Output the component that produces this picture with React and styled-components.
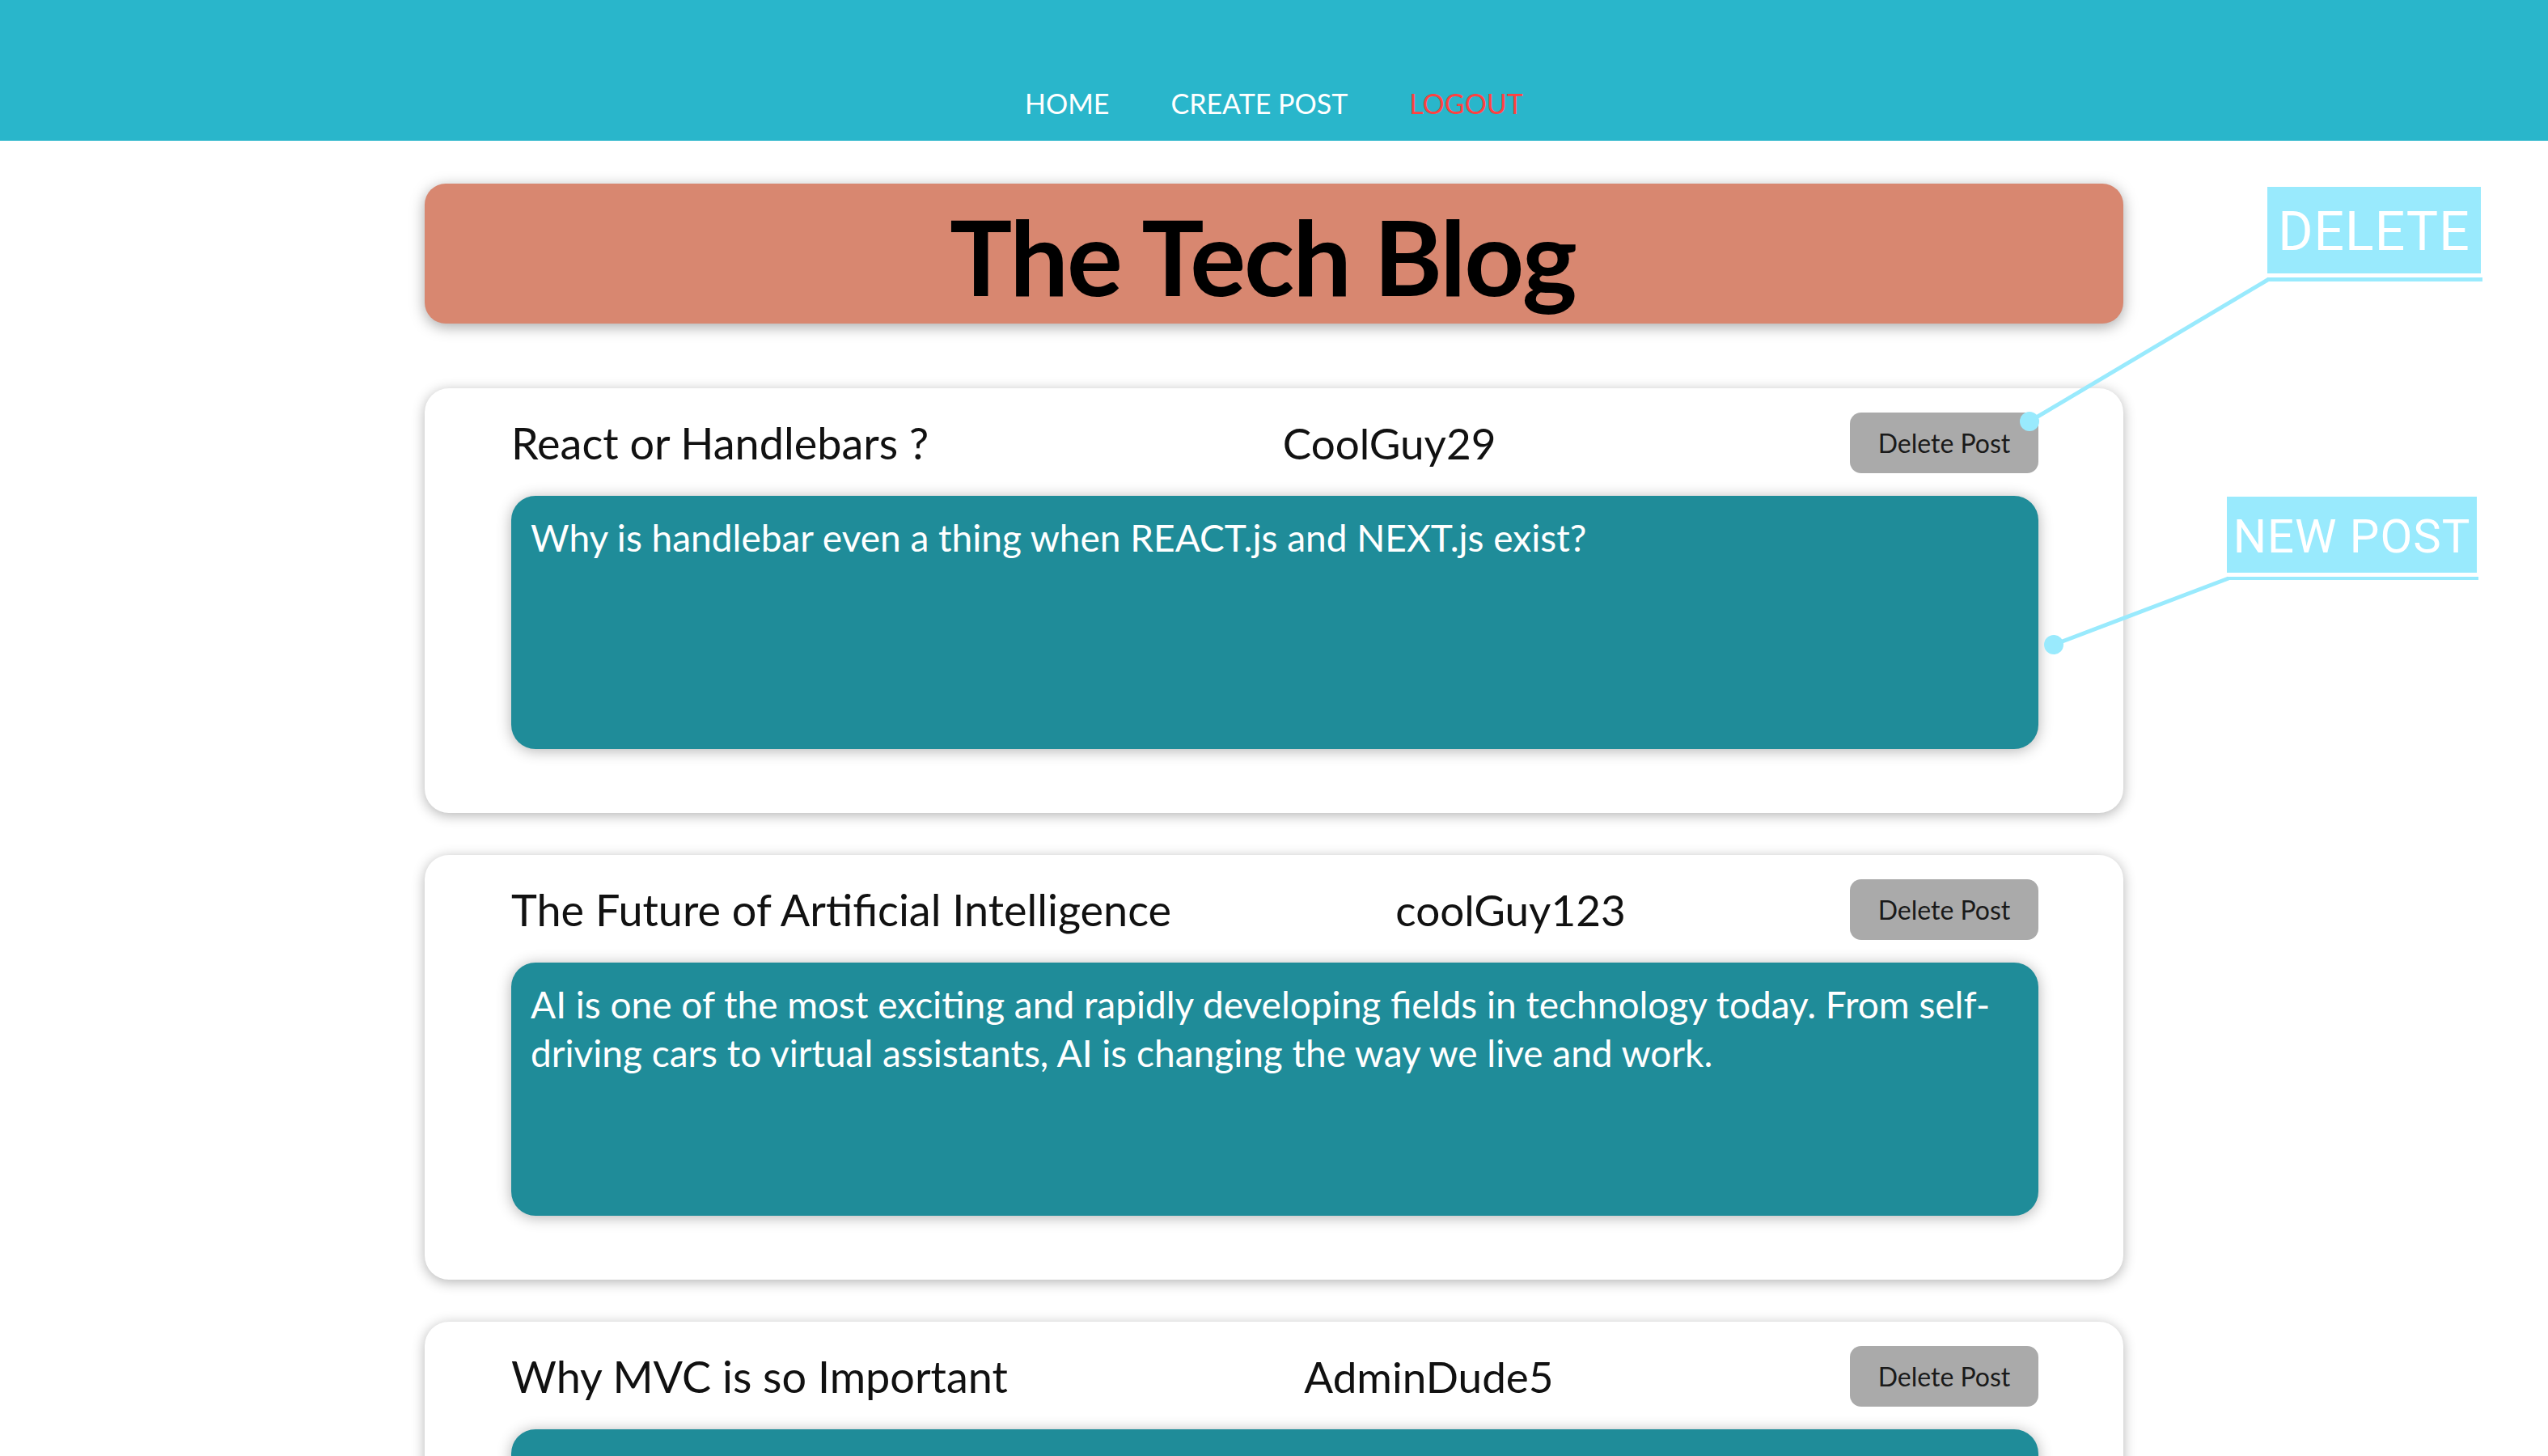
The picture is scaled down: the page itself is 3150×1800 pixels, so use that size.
import React from "react";
import styled, { createGlobalStyle } from "styled-components";

const GlobalStyle = createGlobalStyle`
  html, body {
    margin: 0;
    padding: 0;
    background: #ffffff;
  }
  body {
    font-family: Lato, "Open Sans", sans-serif;
    color: #111;
  }
  * {
    box-sizing: border-box;
  }
`;

const Page = styled.div`
  position: relative;
  min-height: 100vh;
  overflow: hidden;
`;

/* Nav */

const NavBar = styled.nav`
  height: 174px;
  padding-top: 80px;
  background: #29b6cb;
  display: flex;
  justify-content: center;
  align-items: center;
  gap: 76px;
`;

const NavLink = styled.a`
  font-family: Lato, sans-serif;
  font-size: 34px;
  color: ${(p) => (p.$danger ? "#ff4141" : "#ffffff")};
  text-decoration: none;
  cursor: pointer;
`;

/* Main column */

const Main = styled.main`
  width: 2100px;
  margin: 53px auto 0;
`;

const Banner = styled.header`
  height: 173px;
  padding-right: 28px;
  background: #d88770;
  border-radius: 26px;
  box-shadow: 0 4px 18px rgba(0, 0, 0, 0.35);
  display: flex;
  justify-content: center;
  align-items: center;
`;

const BannerTitle = styled.h1`
  margin: 0;
  padding-top: 6px;
  font-family: Lato, sans-serif;
  font-weight: 700;
  font-size: 129px;
  letter-spacing: -2px;
  color: #000;
  line-height: 1;
`;

const PostList = styled.section`
  margin-top: 80px;
  display: flex;
  flex-direction: column;
  gap: 52px;
`;

const PostCard = styled.article`
  height: 525px;
  background: #fff;
  border-radius: 30px;
  box-shadow: 0 3px 16px rgba(0, 0, 0, 0.3);
  padding: 30px 105px 79px 107px;
  display: flex;
  flex-direction: column;
  gap: 28px;
`;

const PostHead = styled.div`
  height: 75px;
  display: flex;
  justify-content: space-between;
  align-items: center;
`;

const PostTitle = styled.h2`
  margin: 0;
  font-family: Lato, sans-serif;
  font-weight: 400;
  font-size: 54px;
  color: #111;
`;

const Author = styled.span`
  font-family: Lato, sans-serif;
  font-size: 53px;
  color: #111;
`;

const DeleteButton = styled.button`
  width: 233px;
  height: 75px;
  border: none;
  border-radius: 14px;
  background: #aaaaaa;
  font-family: Lato, sans-serif;
  font-size: 32px;
  color: #1a1a1a;
  cursor: pointer;
`;

const PostBody = styled.div`
  height: 313px;
  background: #1f8c99;
  border-radius: 30px;
  box-shadow: 0 2px 18px rgba(0, 0, 0, 0.3);
  padding: 22px 24px;
  font-family: Lato, sans-serif;
  font-size: 46px;
  line-height: 60px;
  color: #ffffff;
`;

/* Callouts drawn over the page */

const CalloutLines = styled.svg`
  position: absolute;
  top: 0;
  left: 0;
  pointer-events: none;
`;

const CalloutLabel = styled.div`
  position: absolute;
  top: ${(p) => p.$top}px;
  left: ${(p) => p.$left}px;
  width: ${(p) => p.$width}px;
  height: ${(p) => p.$height}px;
  background: #99eafd;
  color: #ffffff;
  font-family: Roboto, "DejaVu Sans", sans-serif;
  font-size: ${(p) => p.$size}px;
  letter-spacing: 1px;
  display: flex;
  justify-content: center;
  align-items: center;
  padding-top: 4px;
`;

const posts = [
  {
    id: 1,
    title: "React or Handlebars ?",
    author: "CoolGuy29",
    body: "Why is handlebar even a thing when REACT.js and NEXT.js exist?",
  },
  {
    id: 2,
    title: "The Future of Artificial Intelligence",
    author: "coolGuy123",
    body:
      "AI is one of the most exciting and rapidly developing fields in technology today. From self-driving cars to virtual assistants, AI is changing the way we live and work.",
  },
  {
    id: 3,
    title: "Why MVC is so Important",
    author: "AdminDude5",
    body: "",
  },
];

function Callouts() {
  const cyan = "#99eafd";
  return (
    <>
      <CalloutLines width="3150" height="1800" viewBox="0 0 3150 1800">
        {/* DELETE */}
        <rect x="2803" y="343" width="266" height="5" fill={cyan} />
        <line x1="2805" y1="345" x2="2509" y2="521" stroke={cyan} strokeWidth="5" />
        <circle cx="2509" cy="521" r="12" fill={cyan} />
        {/* NEW POST */}
        <rect x="2753" y="713" width="311" height="4" fill={cyan} />
        <line x1="2755" y1="715" x2="2539" y2="797" stroke={cyan} strokeWidth="5" />
        <circle cx="2539" cy="797" r="12" fill={cyan} />
      </CalloutLines>
      <CalloutLabel $top={231} $left={2803} $width={264} $height={107} $size={66}>
        DELETE
      </CalloutLabel>
      <CalloutLabel $top={614} $left={2753} $width={309} $height={94} $size={58}>
        NEW POST
      </CalloutLabel>
    </>
  );
}

export default function App() {
  return (
    <Page>
      <GlobalStyle />
      <NavBar>
        <NavLink>HOME</NavLink>
        <NavLink>CREATE POST</NavLink>
        <NavLink $danger>LOGOUT</NavLink>
      </NavBar>

      <Main>
        <Banner>
          <BannerTitle>The Tech Blog</BannerTitle>
        </Banner>

        <PostList>
          {posts.map((post) => (
            <PostCard key={post.id}>
              <PostHead>
                <PostTitle>{post.title}</PostTitle>
                <Author>{post.author}</Author>
                <DeleteButton>Delete Post</DeleteButton>
              </PostHead>
              <PostBody>{post.body}</PostBody>
            </PostCard>
          ))}
        </PostList>
      </Main>

      <Callouts />
    </Page>
  );
}
